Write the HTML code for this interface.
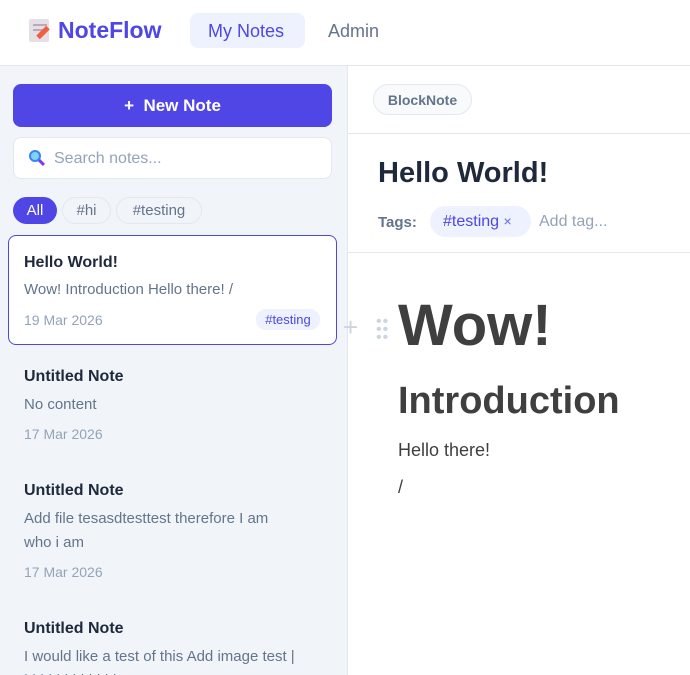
<!DOCTYPE html>
<html><head><meta charset="utf-8"><style>
*{box-sizing:border-box;margin:0;padding:0}
html,body{width:690px;height:675px;overflow:hidden}
body{font-family:"Liberation Sans",sans-serif;background:#fff;position:relative}
.abs{position:absolute;white-space:nowrap}
.hdr{position:absolute;left:0;top:0;width:690px;height:66px;border-bottom:1px solid #e5e7eb;background:#fff}
.side{position:absolute;left:0;top:66px;width:348px;height:609px;background:#f1f5f9;border-right:1px solid #e2e8f0;overflow:hidden}
.t{font-weight:bold;font-size:16px;color:#1e293b}
.p{font-size:15px;color:#64748b}
.d{font-size:14px;color:#94a3b8}
</style></head><body>
<div class="hdr">
  <div class="abs" style="left:29px;top:19px;width:20px;height:23px;background:#e5e0e6;border-radius:2px"></div>
  <div class="abs" style="left:33px;top:24px;width:14px;height:2px;background:#b8aab8"></div>
  <div class="abs" style="left:33px;top:29px;width:10px;height:2px;background:#b8aab8"></div>
  <div class="abs" style="left:36px;top:30px;width:14px;height:5px;background:#f06040;transform:rotate(-45deg)"></div>
  <div class="abs" style="left:58px;top:17px;font-size:23px;font-weight:bold;color:#4f46e5">NoteFlow</div>
  <div class="abs" style="left:190px;top:13px;width:115px;height:35px;background:#eef2ff;border-radius:8px"></div>
  <div class="abs" style="left:208px;top:21px;font-size:18px;color:#4f46e5">My Notes</div>
  <div class="abs" style="left:328px;top:21px;font-size:18px;color:#64748b">Admin</div>
</div>
<div class="side">
  <div class="abs" style="left:13px;top:18px;width:319px;height:43px;background:#4f46e5;border-radius:8px;color:#fff;font-weight:bold;font-size:17px;text-align:center;line-height:43px">+&nbsp; New Note</div>
  <div class="abs" style="left:13px;top:71px;width:319px;height:42px;background:#fff;border:1px solid #e2e8f0;border-radius:8px"></div>
  <div class="abs" style="left:29px;top:84px;width:12px;height:12px;border:2px solid #3b82f6;background:#7dd3fc;border-radius:50%"></div>
  <div class="abs" style="left:38px;top:95px;width:7px;height:3px;background:#7c3aed;transform:rotate(45deg)"></div>
  <div class="abs" style="left:54px;top:84px;font-size:16px;color:#94a3b8">Search notes...</div>
  <div class="abs" style="left:13px;top:131px;width:44px;height:27px;background:#4f46e5;border-radius:14px;color:#fff;font-size:15px;text-align:center;line-height:28px">All</div>
  <div class="abs" style="left:62px;top:131px;width:49px;height:27px;border:1px solid #e2e8f0;border-radius:14px;color:#64748b;font-size:15px;text-align:center;line-height:26px">#hi</div>
  <div class="abs" style="left:116px;top:131px;width:86px;height:27px;border:1px solid #e2e8f0;border-radius:14px;color:#64748b;font-size:15px;text-align:center;line-height:26px">#testing</div>
  <div class="abs" style="left:8px;top:169px;width:329px;height:110px;background:#fff;border:1px solid #4f46e5;border-radius:8px"></div>
  <div class="abs t" style="left:24px;top:188px">Hello World!</div>
  <div class="abs p" style="left:24px;top:215px">Wow! Introduction Hello there! /</div>
  <div class="abs d" style="left:24px;top:246px">19 Mar 2026</div>
  <div class="abs" style="left:256px;top:243px;width:64px;height:21px;background:#eef2ff;border-radius:10px;color:#4f46e5;font-size:13px;text-align:center;line-height:21px">#testing</div>
  <div class="abs t" style="left:24px;top:302px">Untitled Note</div>
  <div class="abs p" style="left:24px;top:330px">No content</div>
  <div class="abs d" style="left:24px;top:360px">17 Mar 2026</div>
  <div class="abs t" style="left:24px;top:416px">Untitled Note</div>
  <div class="abs p" style="left:24px;top:441px;line-height:24px;white-space:normal;width:275px">Add file tesasdtesttest therefore I am who i am</div>
  <div class="abs d" style="left:24px;top:498px">17 Mar 2026</div>
  <div class="abs t" style="left:24px;top:554px">Untitled Note</div>
  <div class="abs p" style="left:24px;top:579px;line-height:24px">I would like a test of this Add image test |<br>| | | | | | | | | | | |</div>
</div>
<div class="abs" style="left:373px;top:84px;width:99px;height:31px;border:1px solid #e2e8f0;border-radius:16px;background:#f8fafc;font-size:14px;font-weight:bold;color:#64748b;text-align:center;line-height:30px">BlockNote</div>
<div class="abs" style="left:348px;top:133px;width:342px;height:1px;background:#e5e7eb"></div>
<div class="abs" style="left:378px;top:157px;font-size:29px;font-weight:bold;color:#1e293b">Hello World!</div>
<div class="abs" style="left:378px;top:214px;font-size:15px;font-weight:bold;color:#64748b">Tags:</div>
<div class="abs" style="left:430px;top:206px;width:101px;height:31px;background:#eef2ff;border-radius:16px"></div>
<div class="abs" style="left:443px;top:213px;font-size:16px;color:#4f46e5">#testing <span style="font-size:14px;color:#6366f1">×</span></div>
<div class="abs" style="left:539px;top:213px;font-size:16px;color:#94a3b8">Add tag...</div>
<div class="abs" style="left:348px;top:252px;width:342px;height:1px;background:#e5e7eb"></div>
<div class="abs" style="left:343px;top:315px;font-size:26px;color:#cbd5e1;line-height:24px">+</div>
<div class="abs" style="left:376px;top:318px;font-size:16px;color:#cbd5e1;line-height:8px;letter-spacing:1px">••<br>••<br>••</div>
<div class="abs" style="left:398px;top:292px;font-size:58px;font-weight:bold;color:#3f3f3f">Wow!</div>
<div class="abs" style="left:398px;top:380px;font-size:38px;font-weight:bold;color:#3f3f3f">Introduction</div>
<div class="abs" style="left:398px;top:440px;font-size:18px;color:#3f3f3f">Hello there!</div>
<div class="abs" style="left:398px;top:477px;font-size:18px;color:#3f3f3f">/</div>
</body></html>
